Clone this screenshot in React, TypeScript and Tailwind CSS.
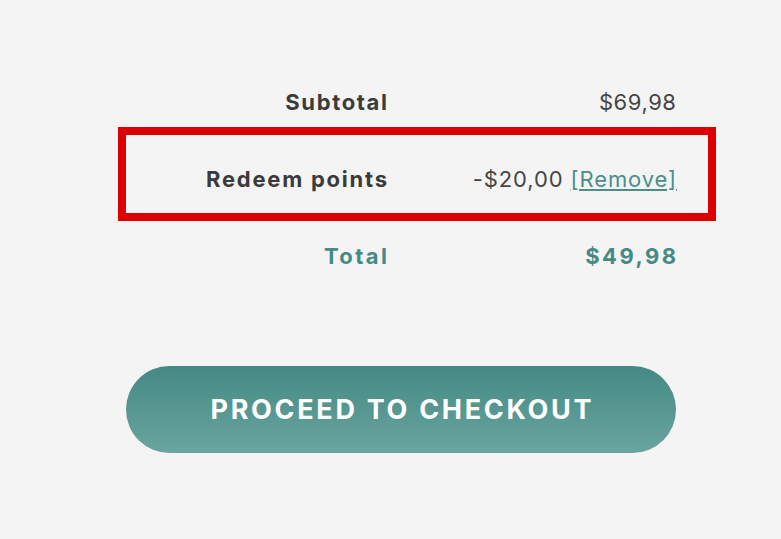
export default function App() {
  return (
    <div className="min-h-[539px] w-full bg-[#f4f4f4] font-['Inter',sans-serif]">
      <div className="ml-[126px] w-[550px] pt-[64px]">
        <div className="grid h-[77px] grid-cols-[261px_1fr] items-center text-[22px]">
          <span className="-mr-[0.075em] text-right font-bold tracking-[0.075em] text-[#3b3b3b]">Subtotal</span>
          <span className="-mr-[0.025em] text-right tracking-[0.025em] text-[#454545]">$69,98</span>
        </div>
        <div className="relative grid h-[77px] grid-cols-[261px_1fr] items-center text-[22px]">
          <div className="pointer-events-none absolute -top-[14px] -bottom-[3px] -left-[8px] -right-[40px] border-[8px] border-[#dc0000]" />
          <span className="-mr-[0.08em] text-right font-bold tracking-[0.08em] text-[#3b3b3b]">Redeem points</span>
          <span className="-mr-[0.04em] text-right tracking-[0.04em] text-[#454545]">
            -$20,00{" "}
            <a href="#" className="text-[#4a8f89] underline underline-offset-2">
              [Remove]
            </a>
          </span>
        </div>
        <div className="grid h-[77px] grid-cols-[261px_1fr] items-center text-[22px] font-bold tracking-[0.11em] text-[#468a84]">
          <span className="-mr-[0.11em] text-right">Total</span>
          <span className="-mr-[0.11em] text-right">$49,98</span>
        </div>
        <button className="mt-[71px] flex h-[87px] w-[550px] items-center justify-center rounded-full bg-gradient-to-b from-[#448984] to-[#6aa59f] pl-[0.1em] pt-[2px] text-[27px] font-bold tracking-[0.1em] text-white">
          PROCEED TO CHECKOUT
        </button>
      </div>
    </div>
  );
}
